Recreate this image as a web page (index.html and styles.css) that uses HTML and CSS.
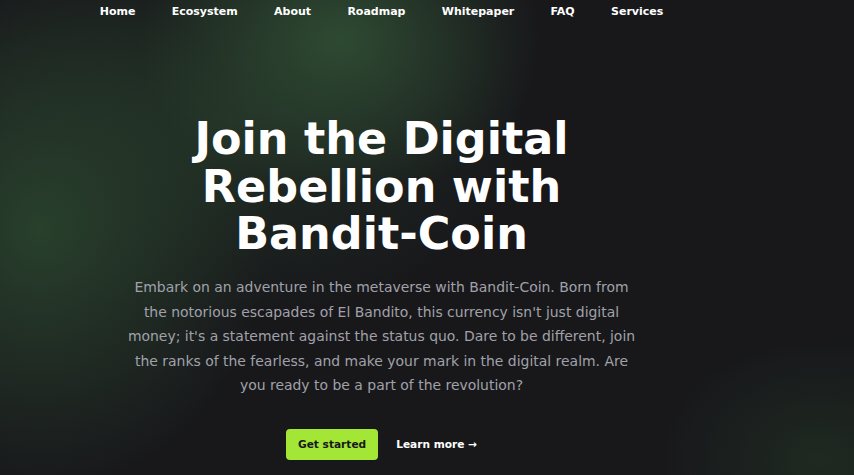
FILE: index.html
```html
<!DOCTYPE html>
<html lang="en">
<head>
<meta charset="utf-8">
<title>Bandit-Coin</title>
<link rel="stylesheet" href="styles.css">
</head>
<body>
<div class="page">
  <nav class="nav">
    <a href="#">Home</a>
    <a href="#">Ecosystem</a>
    <a href="#">About</a>
    <a href="#">Roadmap</a>
    <a href="#">Whitepaper</a>
    <a href="#">FAQ</a>
    <a href="#">Services</a>
  </nav>
  <main class="hero">
    <h1 class="title">Join the Digital Rebellion with Bandit-Coin</h1>
    <p class="lead">Embark on an adventure in the metaverse with Bandit-Coin. Born from the notorious escapades of El Bandito, this currency isn't just digital money; it's a statement against the status quo. Dare to be different, join the ranks of the fearless, and make your mark in the digital realm. Are you ready to be a part of the revolution?</p>
    <div class="actions">
      <a class="btn-primary" href="#">Get started</a>
      <a class="btn-link" href="#">Learn more <span>→</span></a>
    </div>
  </main>
</div>
</body>
</html>
```

FILE: styles.css
```css
html, body {
  margin: 0;
  padding: 0;
  height: 100%;
}
body {
  font-family: "DejaVu Sans", sans-serif;
  color: #ffffff;
  background-color: #18181b;
  background-image:
    radial-gradient(ellipse 200px 160px at 340px 40px, rgba(48, 78, 52, 0.9), rgba(48, 78, 52, 0) 100%),
    radial-gradient(ellipse 230px 260px at 40px 230px, rgba(42, 68, 46, 0.9), rgba(42, 68, 46, 0) 100%),
    radial-gradient(ellipse 300px 200px at 230px 120px, rgba(38, 60, 42, 0.6), rgba(38, 60, 42, 0) 100%),
    radial-gradient(ellipse 160px 120px at 820px 460px, rgba(36, 56, 38, 0.55), rgba(36, 56, 38, 0) 100%);
  overflow: hidden;
}
.page {
  padding-right: 91px;
  min-height: 475px;
  box-sizing: border-box;
}
.nav {
  display: flex;
  justify-content: center;
  gap: 36.3px;
  padding-top: 4px;
  font-size: 11px;
  line-height: 16px;
  font-weight: bold;
}
.nav a {
  color: #ffffff;
  text-decoration: none;
}
.hero {
  display: flex;
  flex-direction: column;
  align-items: center;
  text-align: center;
  padding-top: 95px;
}
.title {
  margin: 0;
  width: 420px;
  font-size: 44.5px;
  line-height: 47.5px;
  font-weight: bold;
}
.lead {
  margin: 17.5px 0 0;
  width: 520px;
  font-size: 13.95px;
  line-height: 24.5px;
  color: #a1a1aa;
}
.actions {
  display: flex;
  align-items: center;
  gap: 18px;
  margin-top: 31.5px;
}
.btn-primary {
  display: block;
  background: #a3e635;
  color: #18181b;
  font-size: 10.6px;
  font-weight: bold;
  line-height: 15px;
  padding: 8px 12px;
  border-radius: 4px;
  text-decoration: none;
}
.btn-link {
  color: #ffffff;
  font-size: 10.6px;
  font-weight: bold;
  line-height: 15px;
  text-decoration: none;
}
```
